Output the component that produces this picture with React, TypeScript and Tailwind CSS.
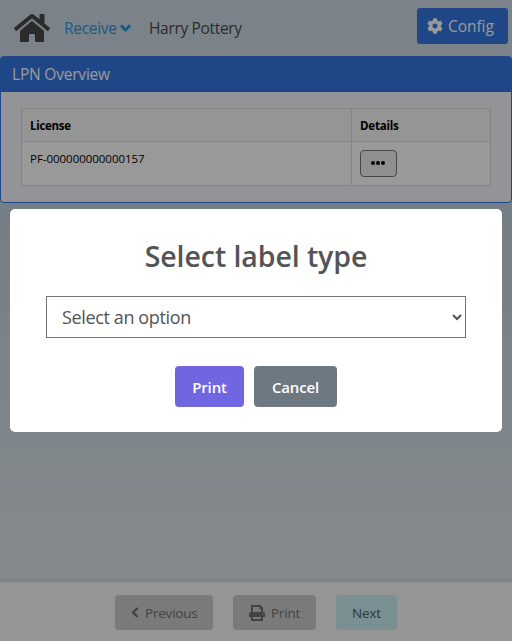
import React from "react";
import { FaHome, FaCog } from "react-icons/fa";

function ChevronDown() {
  return (
    <svg className="ml-[3px] h-[11px] w-[11px]" viewBox="0 0 11 11" fill="none" stroke="currentColor" strokeWidth="2.9">
      <path d="M0.9 2.4 L5.5 7 L10.1 2.4" />
    </svg>
  );
}

function ChevronLeft() {
  return (
    <svg className="h-[11px] w-2" viewBox="0 0 8 11" fill="none" stroke="currentColor" strokeWidth="2.4">
      <path d="M6.6 1 L2.1 5.5 L6.6 10" />
    </svg>
  );
}

function Printer() {
  return (
    <svg className="h-4 w-4" viewBox="0 0 16 16" fill="none" stroke="currentColor" strokeWidth="2">
      <path d="M3 8V1h8l2 2v5" />
      <path d="M10.5 1v2.5H13" strokeWidth="1" />
      <path fill="currentColor" stroke="none" fillRule="evenodd" d="M2 7h12a2 2 0 0 1 2 2v3h-2v4H2v-4H0V9a2 2 0 0 1 2-2zm2 5v2h8v-2zm9-3.5v1h1v-1z" />
    </svg>
  );
}

function TopBar() {
  return (
    <header className="flex h-14 shrink-0 items-center bg-[#cdd9e4] pl-[14px] pr-1">
      <FaHome className="h-9 w-9 text-[#494949]" />
      <div className="ml-[14px] flex items-center text-[#2a9bdf]">
        <span className="w-[53px] whitespace-nowrap pt-0.5 text-[15.5px] tracking-[-0.3px]">Receive</span>
        <ChevronDown />
      </div>
      <span className="ml-[18px] whitespace-nowrap pt-0.5 text-[15.5px] tracking-[-0.33px] text-[#4b4b4b]">Harry Pottery</span>
      <button className="mb-1 ml-auto flex h-9 w-[91px] items-center rounded-[3px] bg-[#3476df] pl-[10px] text-white">
        <FaCog className="h-4 w-4" />
        <span className="ml-[5px] pt-0.5 text-[15.5px] tracking-[-0.05px]">Config</span>
      </button>
    </header>
  );
}

function Overview() {
  return (
    <section className="h-[147px] shrink-0 rounded border border-[#3476df] bg-[#f5f6fd]">
      <h2 className="flex h-[35px] items-center bg-[#3476df] pl-[11px] text-[15.5px] tracking-[-0.2px] text-white">LPN Overview</h2>
      <div className="ml-5 mr-5 mt-4 grid h-[78px] grid-cols-[330px_1fr] grid-rows-[33px_44px] border-l border-t border-[#dcdcdc] bg-white text-[11.5px] leading-4 text-black">
        <div className="border-b border-r border-[#dcdcdc] bg-[#f8f8f8] pl-2 pt-[9px] font-bold tracking-[-0.3px]">License</div>
        <div className="border-b border-r border-[#dcdcdc] bg-[#f8f8f8] pl-2 pt-[9px] font-bold tracking-[-0.2px]">Details</div>
        <div className="border-b border-r border-[#dcdcdc] pl-2 pt-[9px] tracking-[-0.03px]">PF-000000000000157</div>
        <div className="border-b border-r border-[#dcdcdc] pl-2 pt-2">
          <button className="flex h-[27px] w-[37px] items-center justify-center gap-px rounded-sm border border-[#767676] bg-[#efefef] pb-px pr-0.5">
            <i className="h-1 w-1 rounded-full bg-black" />
            <i className="h-1 w-1 rounded-full bg-black" />
            <i className="h-1 w-1 rounded-full bg-black" />
          </button>
        </div>
      </div>
    </section>
  );
}

function BottomBar() {
  return (
    <footer className="mt-auto flex h-[60px] shrink-0 justify-center gap-5 border-t-2 border-[#e3e7ec] bg-[#f8f8f8] pt-3 text-[13.5px] tracking-[-0.2px] shadow-[0_-1px_3px_rgba(0,0,0,0.12)]">
      <button className="flex h-[35px] w-[98px] items-center rounded bg-[#cccccc] pl-4 text-[#707070]">
        <ChevronLeft />
        <span className="ml-[6px] pt-0.5">Previous</span>
      </button>
      <button className="flex h-[35px] w-[83px] items-center rounded bg-[#cccccc] pl-4 text-[#707070]">
        <Printer />
        <span className="ml-[6px] pt-0.5">Print</span>
      </button>
      <button className="flex h-[35px] w-[61px] items-center justify-center rounded bg-[#cceef2] pt-0.5 text-[#525c5f]">Next</button>
    </footer>
  );
}

function LabelDialog() {
  return (
    <div className="absolute inset-0 flex items-center justify-center bg-black/40">
      <div className="flex h-[223px] w-[492px] flex-col items-center rounded-[5px] bg-white">
        <h1 className="mt-[27px] whitespace-nowrap text-[28.5px] font-semibold leading-10 tracking-[-0.08px] text-[#545454]">Select label type</h1>
        <select className="mt-5 h-[42px] w-[420px] rounded-none border border-[#767676] bg-white pl-[11px] text-[18px] tracking-[-0.37px] text-[#545454]">
          <option>Select an option</option>
        </select>
        <div className="mt-7 flex gap-[10px] text-[15px] font-semibold tracking-[-0.15px] text-white">
          <button className="h-[41px] w-[69px] rounded bg-[#7066e0] pt-0.5">Print</button>
          <button className="h-[41px] w-[83px] rounded bg-[#6e7881] pt-0.5">Cancel</button>
        </div>
      </div>
    </div>
  );
}

export default function App() {
  return (
    <main className="relative flex h-[641px] w-[512px] flex-col overflow-hidden bg-linear-to-b from-[#b5c8d9] to-[#e2e9ed] font-['Open_Sans','Noto_Sans',sans-serif]">
      <TopBar />
      <Overview />
      <BottomBar />
      <LabelDialog />
    </main>
  );
}
